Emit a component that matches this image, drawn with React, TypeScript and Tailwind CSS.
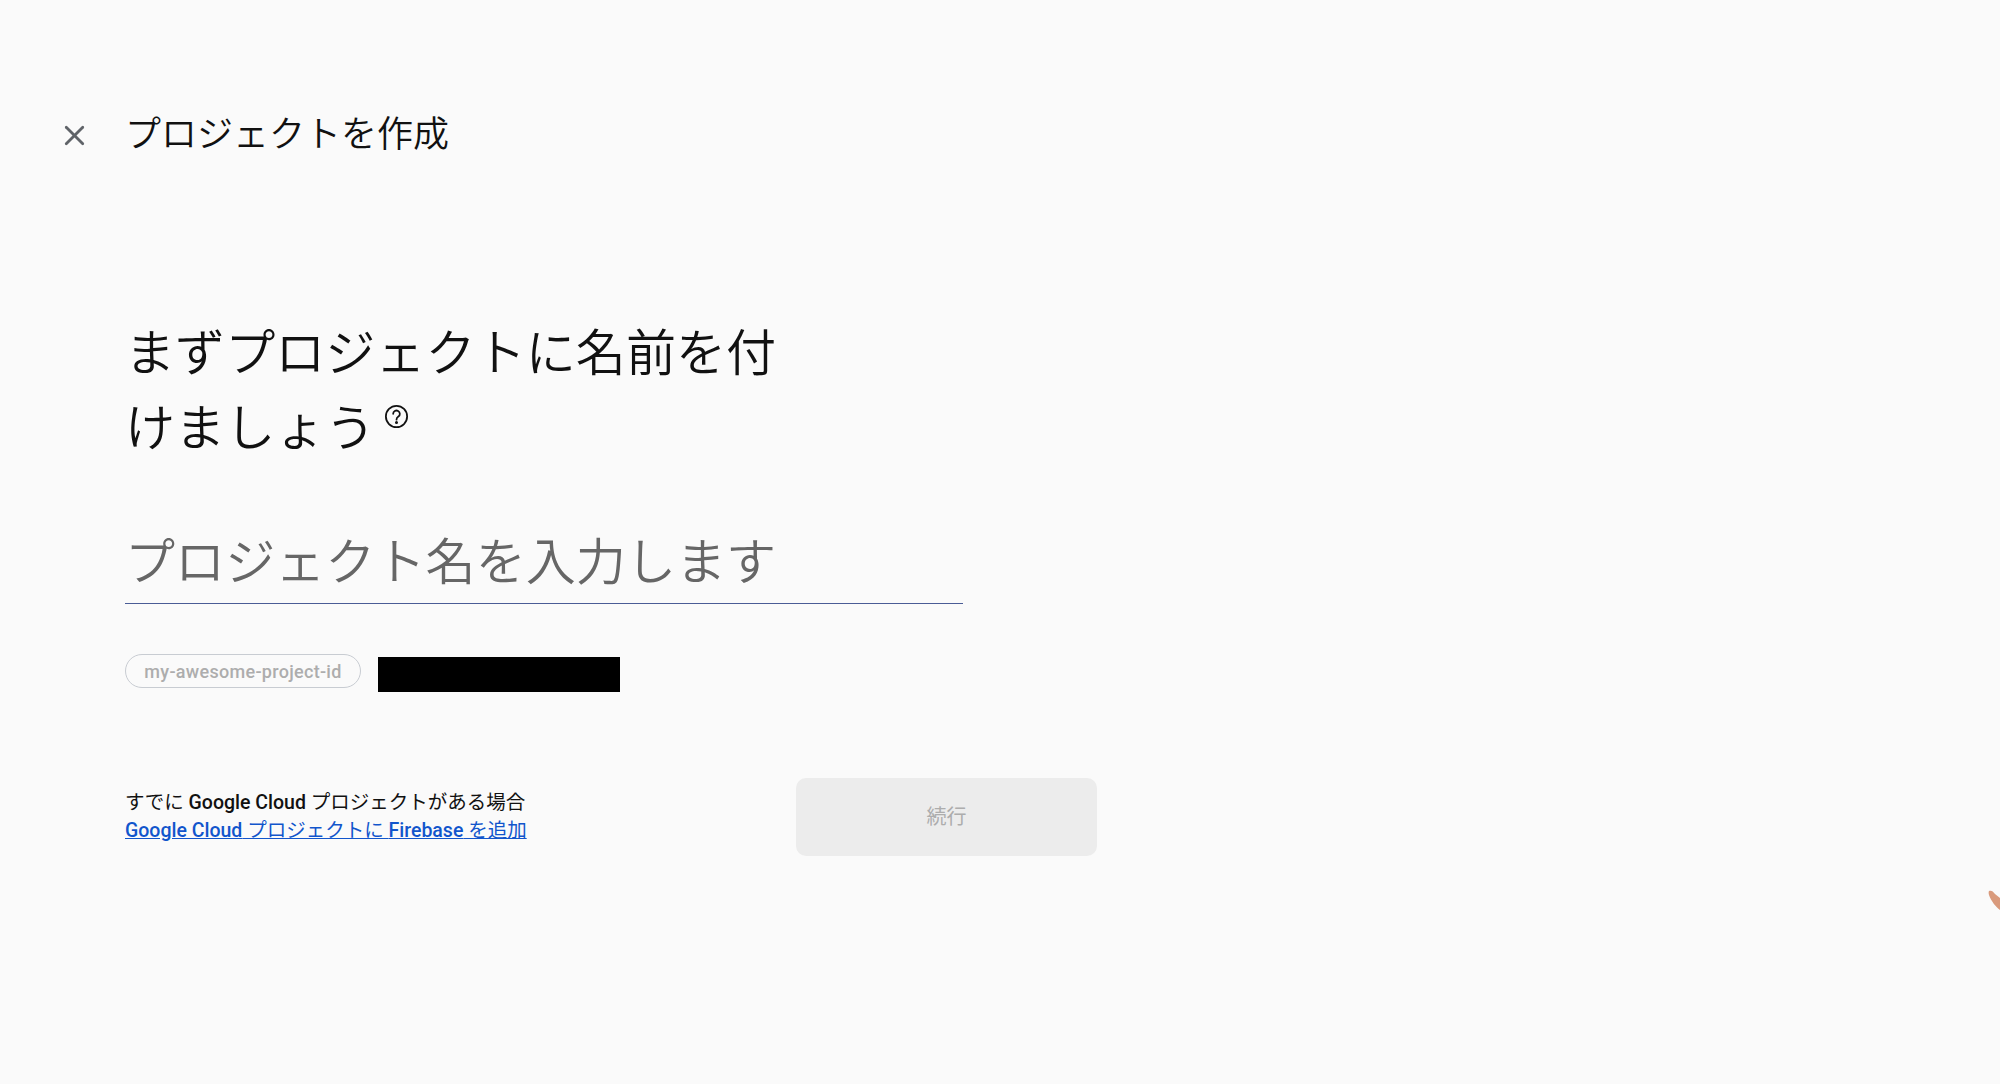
import React from 'react';
import { X } from 'lucide-react';

const FONT = "font-['Roboto','Noto_Sans_CJK_JP',sans-serif]";

function HelpIcon() {
  return (
    <svg viewBox="0 0 24 24" className="ml-[9px] mt-[-26px] h-[25px] w-[25px] fill-none stroke-[#111]" strokeWidth="1.7">
      <circle cx="12" cy="12" r="10.2" />
      <path d="M8.8 9.4a3.2 3.2 0 1 1 5 2.7c-1.2.8-1.8 1.4-1.8 2.9" strokeLinecap="round" />
      <circle cx="12" cy="17.8" r="0.6" fill="#111" />
    </svg>
  );
}

export default function App() {
  return (
    <div className={`${FONT} relative h-[1084px] w-[2000px] overflow-hidden bg-[#fafafa] text-[#111]`}>
      <header className="flex items-center pl-[58px] pt-[110px]">
        <X className="h-[33px] w-[33px] text-[#5f6368]" strokeWidth={2} />
        <h1 className="ml-[34px] text-[36px] leading-[50px] font-[350]">プロジェクトを作成</h1>
      </header>

      <main className="w-[1097px] pl-[125px] pt-[157px]">
        <h2 className="flex w-[680px] flex-wrap text-[50.1px] leading-[75px] font-[350]">
          <span>まずプロジェクトに名前を付</span>
          <span className="flex items-center">
            けましょう
            <HelpIcon />
          </span>
        </h2>

        <input
          placeholder="プロジェクト名を入力します"
          className="mt-[49px] block h-[88px] w-[838px] border-b border-[#4a5c96] bg-transparent pt-[6px] text-[50.1px] font-[350] outline-none placeholder:text-[#666]"
        />

        <div className="mt-[50px] flex items-start gap-[17px]">
          <span className="flex h-[34px] w-[236px] items-center justify-center rounded-full border border-[#c8ccd2] text-[18px] font-medium tracking-[0.3px] text-[#adadad]">
            my-awesome-project-id
          </span>
          <div className="mt-[3px] h-[35px] w-[242px] bg-black" />
        </div>

        <div className="mt-[86px] flex items-center justify-between">
          <div className="mb-[1px] text-[19.5px] leading-[28px]">
            <p>
              すでに <span className="font-medium">Google Cloud</span> プロジェクトがある場合
            </p>
            <a href="#" className="text-[#1155cc] underline">
              <span className="font-medium">Google Cloud</span> プロジェクトに <span className="font-medium">Firebase</span> を追加
            </a>
          </div>
          <button className="h-[78px] w-[301px] rounded-[10px] bg-[#ececec] text-[20px] text-[#adadad]">続行</button>
        </div>
      </main>

      {/* edge of the illustration peeking in from the right */}
      <svg viewBox="0 0 14 24" className="absolute left-[1986px] top-[888px] h-[24px] w-[14px]">
        <path d="M3 3c2-1 4 0 6 3l5 4v12c-4-3-9-9-11-15-.5-1.600-.5-3 0-4z" fill="#d99a7c" />
      </svg>
    </div>
  );
}
